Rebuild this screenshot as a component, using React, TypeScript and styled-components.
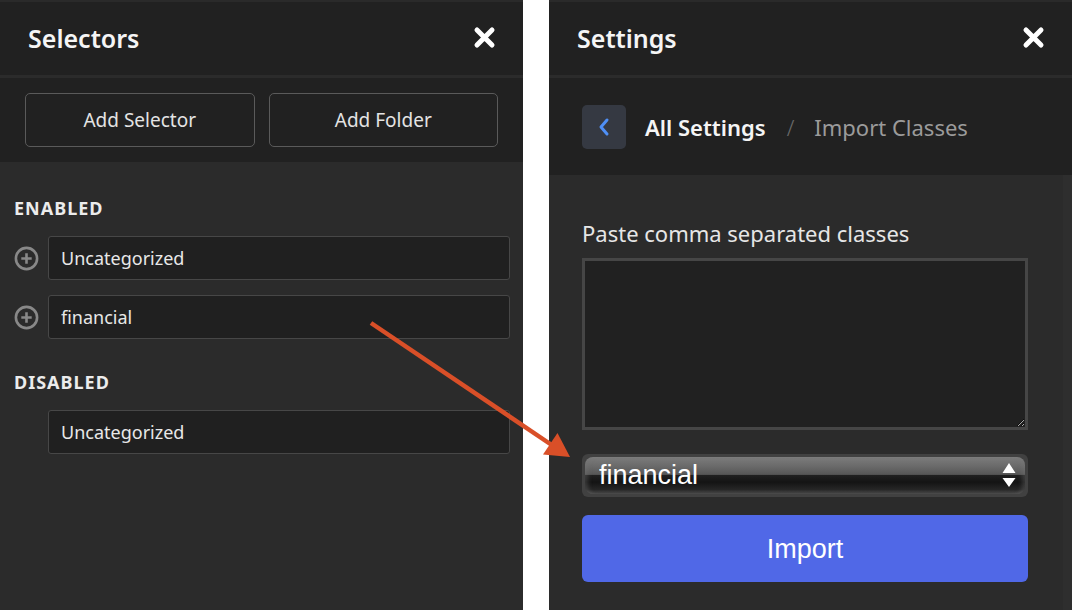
import React from "react";
import styled, { createGlobalStyle } from "styled-components";

const Global = createGlobalStyle`
  html, body { margin: 0; padding: 0; background: #ffffff; }
  body { font-family: "Noto Sans", "Open Sans", sans-serif; }
  *, *::before, *::after { box-sizing: border-box; }
`;

const Page = styled.div`
  position: relative;
  width: 1072px;
  height: 610px;
  display: flex;
  justify-content: space-between;
  background: #ffffff;
  overflow: hidden;
`;

const Panel = styled.section`
  width: 523px;
  height: 610px;
  display: flex;
  flex-direction: column;
  background: #2b2b2b;
`;

const Header = styled.header`
  flex: none;
  height: 78px;
  display: flex;
  align-items: center;
  justify-content: space-between;
  padding: 0 27px 2px 28px;
  background: #212121;
  border-top: 2px solid #2a2a2a;
  border-bottom: 3px solid #2b2b2b;
`;

const Title = styled.h1`
  margin: 0;
  font: 600 25px/30px "Noto Sans", sans-serif;
  color: #f5f5f5;
`;

const CloseButton = styled.button`
  width: 23px;
  height: 23px;
  padding: 0;
  border: 0;
  background: transparent;
  display: flex;
  align-items: center;
  justify-content: center;
  cursor: pointer;
`;

const Toolbar = styled.div`
  flex: none;
  height: 84px;
  display: grid;
  grid-template-columns: 1fr 1fr;
  gap: 14px;
  padding: 15px 25px;
  background: #212121;
`;

const OutlineButton = styled.button`
  height: 54px;
  border: 1px solid #5a5a5a;
  border-radius: 5px;
  background: transparent;
  color: #e4e4e4;
  font: 400 19px/24px "Noto Sans", sans-serif;
  cursor: pointer;
`;

const ListBody = styled.div`
  flex: 1;
  padding: 34px 13px 0 14px;
`;

const SectionHeading = styled.h2<{ $spaced?: boolean }>`
  margin: ${(p) => (p.$spaced ? "31px" : "0")} 0 16px;
  font: 700 18px/24px "Noto Sans", sans-serif;
  letter-spacing: 1px;
  color: #ececec;
`;

const FolderList = styled.div`
  display: flex;
  flex-direction: column;
  gap: 15px;
`;

const FolderRow = styled.div`
  display: flex;
  align-items: center;
  gap: 9px;
`;

const IconSlot = styled.span`
  flex: none;
  width: 25px;
  height: 25px;
  display: flex;
  align-items: center;
  justify-content: center;
`;

const FolderInput = styled.input`
  flex: 1;
  min-width: 0;
  height: 44px;
  padding: 0 12px;
  border: 1px solid #474747;
  border-radius: 3px;
  background: #202020;
  color: #e8e8e8;
  font: 400 18px/24px "Noto Sans", sans-serif;
  outline: none;
`;

const Breadcrumb = styled.nav`
  flex: none;
  height: 97px;
  display: flex;
  align-items: center;
  padding-left: 33px;
  background: #212121;
`;

const BackButton = styled.button`
  width: 44px;
  height: 44px;
  padding: 0;
  border: 0;
  border-radius: 5px;
  background: #353942;
  display: flex;
  align-items: center;
  justify-content: center;
  margin-right: 19px;
  cursor: pointer;
`;

const Crumb = styled.span<{ $current?: boolean }>`
  font: ${(p) => (p.$current ? 400 : 600)} 22px/30px "Noto Sans", sans-serif;
  color: ${(p) => (p.$current ? "#9b9b9b" : "#f5f5f5")};
`;

const Slash = styled.span`
  margin: 0 20px 0 21px;
  font: 300 22px/30px "Noto Sans", sans-serif;
  color: #6a6a6a;
`;

const Form = styled.div`
  flex: 1;
  display: flex;
  flex-direction: column;
  padding: 43px 44px 0 33px;
  box-shadow: inset -9px 0 0 #2e2e2e;
`;

const FieldLabel = styled.label`
  margin-bottom: 10px;
  font: 400 22px/30px "Noto Sans", sans-serif;
  color: #e6e6e6;
`;

const ClassesArea = styled.textarea`
  display: block;
  width: 100%;
  height: 172px;
  border: 3px solid #464646;
  background: #212121;
  color: #e8e8e8;
  outline: none;
  resize: vertical;
`;

const SelectFrame = styled.div`
  position: relative;
  margin-top: 24px;
  height: 43px;
  padding: 3px;
  border-radius: 6px;
  background: #414141;
`;

const FolderSelect = styled.select`
  appearance: none;
  display: block;
  width: 100%;
  height: 37px;
  padding: 0 0 0 14px;
  border: 0;
  border-radius: 8px;
  background: linear-gradient(
    to bottom,
    #7c7c7c 0%,
    #6a6a6a 25%,
    #575757 47%,
    #202020 50%,
    #141414 68%,
    #262626 88%,
    #4c4c4c 100%
  );
  box-shadow: inset 6px 0 4px -3px rgba(120, 120, 120, 0.35),
    inset -6px 0 4px -3px rgba(120, 120, 120, 0.35);
  color: #ffffff;
  font: 400 27px/37px "Liberation Sans", Arial, sans-serif;
  outline: none;
`;

const SelectArrows = styled.svg`
  position: absolute;
  right: 12px;
  top: 9px;
  pointer-events: none;
`;

const ImportButton = styled.button`
  margin-top: 18px;
  height: 67px;
  border: 0;
  border-radius: 6px;
  background: #5068e7;
  color: #ffffff;
  font: 400 27px/32px "Liberation Sans", Arial, sans-serif;
  cursor: pointer;
`;

const ArrowOverlay = styled.svg`
  position: absolute;
  left: 0;
  top: 0;
  pointer-events: none;
`;

const CloseIcon = () => (
  <svg width="23" height="23" viewBox="0 0 23 23">
    <path d="M4 4 L19 19 M19 4 L4 19" stroke="#ffffff" strokeWidth="5" strokeLinecap="round" />
  </svg>
);

const PlusCircle = () => (
  <svg width="25" height="25" viewBox="0 0 25 25">
    <circle cx="12.5" cy="12.5" r="10.6" fill="none" stroke="#888888" strokeWidth="2.6" />
    <path d="M12.5 7.3 V17.7 M7.3 12.5 H17.7" stroke="#888888" strokeWidth="2.6" />
  </svg>
);

const ChevronLeft = () => (
  <svg width="14" height="20" viewBox="0 0 14 20">
    <path d="M10 3 L4 10 L10 17" fill="none" stroke="#4f8ff5" strokeWidth="3" strokeLinecap="round" strokeLinejoin="round" />
  </svg>
);

type Folder = { name: string; addable: boolean };

const enabled: Folder[] = [
  { name: "Uncategorized", addable: true },
  { name: "financial", addable: true },
];
const disabled: Folder[] = [{ name: "Uncategorized", addable: false }];

const FolderGroup = ({ items }: { items: Folder[] }) => (
  <FolderList>
    {items.map((f, i) => (
      <FolderRow key={i}>
        <IconSlot>{f.addable && <PlusCircle />}</IconSlot>
        <FolderInput readOnly value={f.name} />
      </FolderRow>
    ))}
  </FolderList>
);

export default function App() {
  return (
    <>
      <Global />
      <Page>
        <Panel>
          <Header>
            <Title>Selectors</Title>
            <CloseButton aria-label="Close">
              <CloseIcon />
            </CloseButton>
          </Header>
          <Toolbar>
            <OutlineButton>Add Selector</OutlineButton>
            <OutlineButton>Add Folder</OutlineButton>
          </Toolbar>
          <ListBody>
            <SectionHeading>ENABLED</SectionHeading>
            <FolderGroup items={enabled} />
            <SectionHeading $spaced>DISABLED</SectionHeading>
            <FolderGroup items={disabled} />
          </ListBody>
        </Panel>

        <Panel>
          <Header>
            <Title>Settings</Title>
            <CloseButton aria-label="Close">
              <CloseIcon />
            </CloseButton>
          </Header>
          <Breadcrumb>
            <BackButton aria-label="Back">
              <ChevronLeft />
            </BackButton>
            <Crumb>All Settings</Crumb>
            <Slash>/</Slash>
            <Crumb $current>Import Classes</Crumb>
          </Breadcrumb>
          <Form>
            <FieldLabel>Paste comma separated classes</FieldLabel>
            <ClassesArea />
            <SelectFrame>
              <FolderSelect defaultValue="financial">
                <option value="Uncategorized">Uncategorized</option>
                <option value="financial">financial</option>
              </FolderSelect>
              <SelectArrows width="14" height="25" viewBox="0 0 14 25">
                <path d="M7 0 L13.5 10 H0.5 Z M0.5 15 H13.5 L7 24 Z" fill="#ffffff" />
              </SelectArrows>
            </SelectFrame>
            <ImportButton>Import</ImportButton>
          </Form>
        </Panel>

        <ArrowOverlay width="1072" height="610" viewBox="0 0 1072 610">
          <line x1="371" y1="323" x2="551" y2="444.5" stroke="#d94f28" strokeWidth="4.5" />
          <polygon points="570,457 543,454.5 557.5,433" fill="#d94f28" />
        </ArrowOverlay>
      </Page>
    </>
  );
}
